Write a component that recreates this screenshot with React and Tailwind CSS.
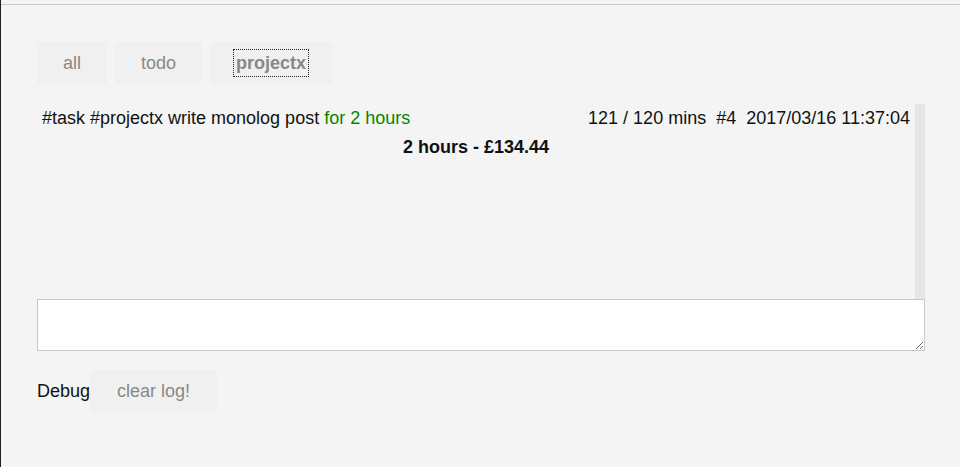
export default function App() {
  return (
    <div className="h-[467px] w-[960px] overflow-hidden bg-[#f4f4f4] border-l border-[#1e1f29] pt-[4px] font-['Liberation_Sans',Arial,sans-serif]">
      <div className="border-t border-[#c9c9c9] h-full pl-[36px] pr-[35px] pt-[37px]">
        <div className="flex gap-[8px]">
          <button className="h-[43px] px-[26px] rounded-[4px] bg-[#f0f0f0] text-[18px] text-[#888888]">all</button>
          <button className="h-[43px] px-[26px] rounded-[4px] bg-[#f0f0f0] text-[18px] text-[#888888]">todo</button>
          <button className="h-[43px] px-[24px] rounded-[4px] bg-[#f0f0f0] text-[18px] text-[#888888] font-bold">
            <span className="outline-1 outline-dotted outline-[#222] px-[2px] py-[3px]">projectx</span>
          </button>
        </div>
        <div className="mt-[19px] flex h-[195px]">
          <div className="flex-1 pl-[5px] pr-[5px] text-[18px] text-[#111]">
            <div className="flex justify-between h-[29px] items-center">
              <span>
                #task #projectx write monolog post <span className="text-[#008800]">for 2 hours</span>
              </span>
              <span className="whitespace-pre">121 / 120 mins  #4  2017/03/16 11:37:04</span>
            </div>
            <div className="h-[29px] flex items-center justify-center font-bold">2 hours - £134.44</div>
          </div>
          <div className="w-[10px] bg-[#e6e6e6]"></div>
        </div>
        <textarea className="block w-full h-[52px] bg-white border border-[#c8c8c8] resize-y outline-none"></textarea>
        <div className="mt-[19px] flex items-center">
          <span className="text-[18px] text-[#111]">Debug</span>
          <button className="h-[43px] px-[27px] rounded-[4px] bg-[#f0f0f0] text-[18px] text-[#888888]">clear log!</button>
        </div>
      </div>
    </div>
  );
}
